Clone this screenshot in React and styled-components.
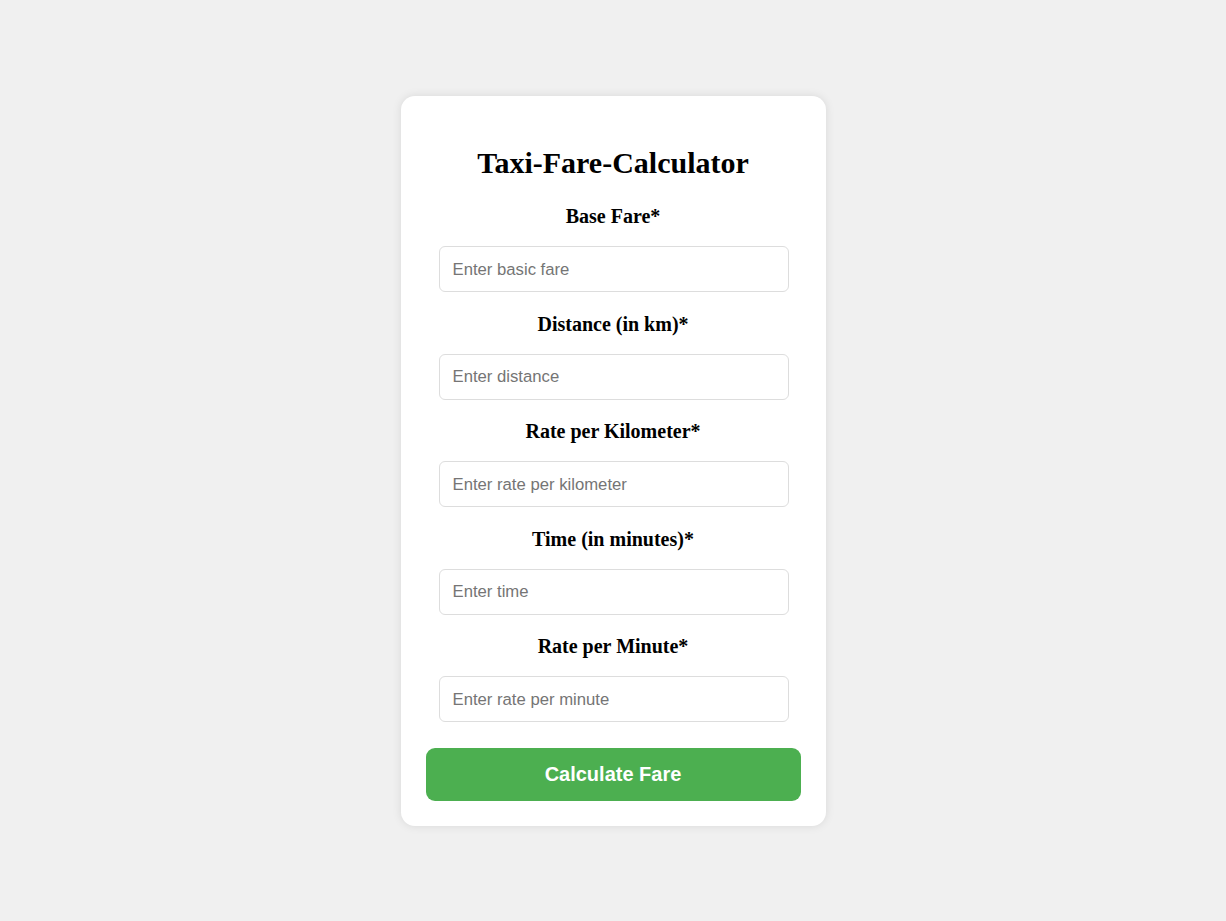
import React from 'react'
import styled, { createGlobalStyle } from "styled-components";

const GlobalStyle = createGlobalStyle`
  body {
    margin: 0;
    background-color: #f0f0f0;
    font-family: "Liberation Serif", "Times New Roman", serif;
  }
`;

const Main = styled.div`
  width: 100vw;
  min-height: 100vh;
  display: flex;
  justify-content: center;
  padding-top: 96px;
  box-sizing: border-box;
`;

const Card = styled.form`
  width: 425px;
  height: 730px;
  box-sizing: border-box;
  padding: 25px;
  background-color: #ffffff;
  border-radius: 14px;
  box-shadow: 0 0 10px rgba(0, 0, 0, 0.1);
  display: flex;
  flex-direction: column;
  align-items: center;
`;

const Title = styled.h1`
  margin: 24px 0 0;
  font-size: 30px;
  line-height: 36px;
  font-weight: bold;
  color: #000;
`;

const Field = styled.div`
  display: flex;
  flex-direction: column;
  align-items: center;
  width: 100%;
  margin-top: ${(p) => (p.first ? "24px" : "20.5px")};
`;

const Label = styled.label`
  font-size: 20px;
  line-height: 22.5px;
  font-weight: bold;
  color: #000;
  margin-bottom: 18.5px;
`;

const Input = styled.input`
  width: 350px;
  height: 46px;
  margin-left: 1px;
  box-sizing: border-box;
  padding: 1px 13px 0;
  border: 1px solid #dddddd;
  border-radius: 6px;
  font-family: "Liberation Sans", Arial, sans-serif;
  font-size: 16.7px;
  color: #333;
  outline: none;
  ::placeholder {
    color: #757575;
  }
`;

const Button = styled.button`
  width: 375px;
  height: 53px;
  margin-top: 26px;
  border: none;
  border-radius: 9px;
  background-color: #4caf50;
  color: #ffffff;
  font-family: "Liberation Sans", Arial, sans-serif;
  font-size: 20px;
  font-weight: bold;
  cursor: pointer;
`;

const fields = [
  { label: "Base Fare*", placeholder: "Enter basic fare" },
  { label: "Distance (in km)*", placeholder: "Enter distance" },
  { label: "Rate per Kilometer*", placeholder: "Enter rate per kilometer" },
  { label: "Time (in minutes)*", placeholder: "Enter time" },
  { label: "Rate per Minute*", placeholder: "Enter rate per minute" },
];

export default function App() {
  return (
    <Main>
      <GlobalStyle />
      <Card onSubmit={(e) => e.preventDefault()}>
        <Title>Taxi-Fare-Calculator</Title>
        {fields.map((f, i) => (
          <Field key={f.label} first={i === 0}>
            <Label>{f.label}</Label>
            <Input type="number" placeholder={f.placeholder} />
          </Field>
        ))}
        <Button type="submit">Calculate Fare</Button>
      </Card>
    </Main>
  )
}
